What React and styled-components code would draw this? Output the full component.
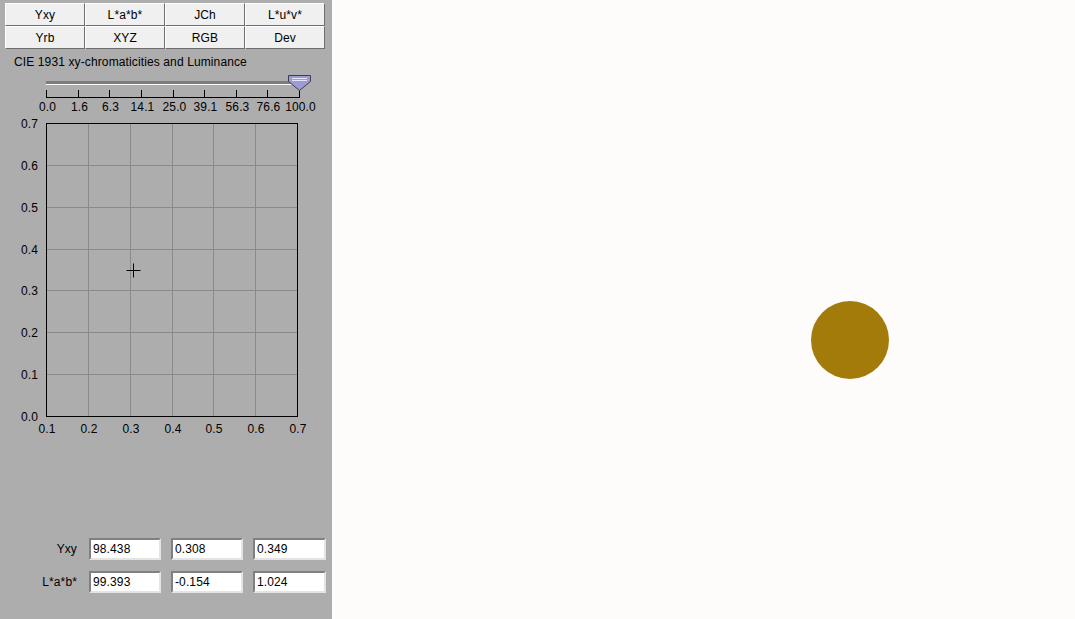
import React from 'react';
import styled, { createGlobalStyle } from 'styled-components';

const GlobalStyle = createGlobalStyle`
  html, body {
    margin: 0;
    padding: 0;
    height: 100%;
  }
  body {
    font-family: "Liberation Sans", Arial, sans-serif;
    font-size: 12px;
    letter-spacing: 0.12px;
    color: #000;
  }
`;

const Page = styled.div`
  display: flex;
  width: 1075px;
  height: 619px;
  overflow: hidden;
`;

const Panel = styled.div`
  width: 332px;
  flex: none;
  background: #adadad;
  display: flex;
  flex-direction: column;
`;

const ButtonGrid = styled.div`
  display: grid;
  grid-template-columns: repeat(4, 80px);
  grid-auto-rows: 23px;
  margin: 3px 0 0 5px;
`;

const ModeButton = styled.button`
  font-family: "Liberation Sans", Arial, sans-serif;
  font-size: 12px;
  letter-spacing: 0.12px;
  color: #000;
  background: #f0f0f0;
  border: 1px solid;
  border-color: #ffffff #6e6e6e #6e6e6e #ffffff;
  padding: 0;
  margin: 0;
  cursor: pointer;
`;

const Title = styled.div`
  margin: 6px 0 0 14px;
  line-height: 14px;
  height: 14px;
`;

const Drawing = styled.svg`
  display: block;
  flex: none;
  font-family: "Liberation Sans", Arial, sans-serif;
  font-size: 12px;
  letter-spacing: 0.12px;
`;

const Spacer = styled.div`
  flex: 1;
`;

const Fields = styled.div`
  display: grid;
  grid-template-columns: 79px repeat(3, 72px);
  grid-auto-rows: 22px;
  column-gap: 10px;
  row-gap: 11px;
  padding-bottom: 26px;
`;

const FieldLabel = styled.div`
  text-align: right;
  padding-right: 2px;
  line-height: 22px;
`;

const Field = styled.input`
  box-sizing: border-box;
  width: ${(p) => (p.$wide ? 73 : 72)}px;
  height: 22px;
  margin: 0;
  padding: 0 2px;
  font-family: "Liberation Sans", Arial, sans-serif;
  font-size: 12px;
  letter-spacing: 0.12px;
  color: #000;
  background: #fff;
  border: 2px solid;
  border-color: #808080 #e4e4e4 #e4e4e4 #808080;
  outline: none;
`;

const Canvas = styled.div`
  flex: 1;
  background: #fdfcfa;
  padding: 301px 0 0 479px;
`;

const Swatch = styled.div`
  width: 78px;
  height: 78px;
  border-radius: 50%;
  background: #a27b0a;
`;

const modes = ['Yxy', 'L*a*b*', 'JCh', 'L*u*v*', 'Yrb', 'XYZ', 'RGB', 'Dev'];
const scale = ['0.0', '1.6', '6.3', '14.1', '25.0', '39.1', '56.3', '76.6', '100.0'];

const rows = [
  { label: 'Yxy', values: ['98.438', '0.308', '0.349'] },
  { label: 'L*a*b*', values: ['99.393', '-0.154', '1.024'] },
];

const Slider = () => {
  const x0 = 46;
  const x1 = 299;
  const step = (x1 - x0) / (scale.length - 1);
  return (
    <Drawing width="332" height="46">
      <rect x={x0} y="12" width={x1 - x0} height="3" fill="#7c7c7c" />
      <line x1={x0} y1="15.5" x2={x1} y2="15.5" stroke="#fff" />
      <line x1={x0} y1="28.5" x2={x1 + 1} y2="28.5" stroke="#000" />
      {scale.map((s, i) => {
        const x = Math.round(x0 + i * step) + 0.5;
        return (
          <g key={s}>
            <line x1={x} y1="21" x2={x} y2="29" stroke="#000" />
            <text x={x + 1} y="42" textAnchor="middle">{s}</text>
          </g>
        );
      })}
      <polygon
        points="288.5,6.5 310.5,6.5 310.5,12.5 299.5,21.5 288.5,12.5"
        fill="#9c9cd0"
        stroke="#3c3c5a"
      />
      <line x1="292" y1="9.5" x2="307" y2="9.5" stroke="#e6e6fa" />
      <line x1="292" y1="11.5" x2="307" y2="11.5" stroke="#e6e6fa" />
    </Drawing>
  );
};

const Chart = () => {
  const left = 46;
  const right = 297;
  const top = 8;
  const bottom = 301;
  const xs = ['0.1', '0.2', '0.3', '0.4', '0.5', '0.6', '0.7'];
  const ys = ['0.0', '0.1', '0.2', '0.3', '0.4', '0.5', '0.6', '0.7'];
  const dx = (right - left) / (xs.length - 1);
  const dy = (bottom - top) / (ys.length - 1);
  const cx = 133.5;
  const cy = 155.5;
  return (
    <Drawing width="332" height="326">
      {xs.slice(1, -1).map((_, i) => {
        const x = Math.round(left + (i + 1) * dx) + 0.5;
        return <line key={i} x1={x} y1={top} x2={x} y2={bottom} stroke="#898989" />;
      })}
      {ys.slice(1, -1).map((_, i) => {
        const y = Math.round(bottom - (i + 1) * dy) + 0.5;
        return <line key={i} x1={left} y1={y} x2={right} y2={y} stroke="#898989" />;
      })}
      <rect x={left + 0.5} y={top + 0.5} width={right - left} height={bottom - top} fill="none" stroke="#000" />
      {ys.map((v, i) => (
        <text key={v} x="38" y={Math.round(bottom - i * dy) + 5} textAnchor="end">{v}</text>
      ))}
      {xs.map((v, i) => (
        <text key={v} x={Math.round(left + i * dx) + 1} y="318" textAnchor="middle">{v}</text>
      ))}
      <line x1={cx - 7} y1={cy} x2={cx + 7} y2={cy} stroke="#000" />
      <line x1={cx} y1={cy - 7} x2={cx} y2={cy + 7} stroke="#000" />
    </Drawing>
  );
};

const App = () => {
  return (
    <Page>
      <GlobalStyle />
      <Panel>
        <ButtonGrid>
          {modes.map((m) => (
            <ModeButton key={m}>{m}</ModeButton>
          ))}
        </ButtonGrid>
        <Title>CIE 1931 xy-chromaticities and Luminance</Title>
        <Slider />
        <Chart />
        <Spacer />
        <Fields>
          {rows.map((r) => (
            <React.Fragment key={r.label}>
              <FieldLabel>{r.label}</FieldLabel>
              {r.values.map((v, i) => (
                <Field key={i} defaultValue={v} $wide={i === 2} />
              ))}
            </React.Fragment>
          ))}
        </Fields>
      </Panel>
      <Canvas>
        <Swatch />
      </Canvas>
    </Page>
  );
};

export default App;
